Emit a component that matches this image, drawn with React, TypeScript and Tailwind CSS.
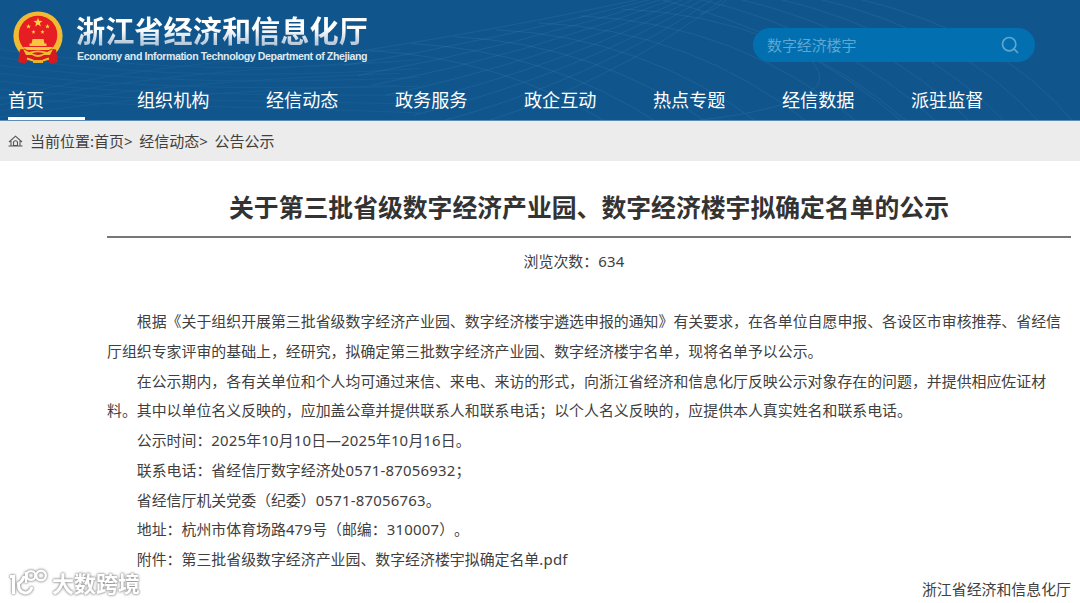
import { Search } from "lucide-react";

const NAV_ITEMS = [
  "首页",
  "组织机构",
  "经信动态",
  "政务服务",
  "政企互动",
  "热点专题",
  "经信数据",
  "派驻监督",
];

/* ================= DECORATION ================= */

const range = (n: number) => Array.from({ length: n }, (_, i) => i);

function HeaderWaves() {
  return (
    <svg
      className="absolute inset-0 h-full w-full"
      viewBox="0 0 1080 121"
      preserveAspectRatio="none"
      fill="none"
      stroke="#5f9fd0"
      strokeWidth="1"
    >
      {/* lines climbing to the right */}
      <g opacity="0.14">
        {range(9).map((i) => (
          <path
            key={i}
            d={`M${330 + i * 14} ${56 + i * 10} Q${480 + i * 16} ${34 + i * 7} ${655 + i * 9} -4`}
          />
        ))}
      </g>
      {/* arcs falling to the right */}
      <g opacity="0.15">
        {range(7).map((i) => (
          <path
            key={i}
            d={`M${370 + i * 42} ${51 - i * 7} Q${500 + i * 48} ${58 - i * 7} ${610 + i * 50} 125`}
          />
        ))}
        {range(6).map((i) => (
          <path
            key={i}
            d={`M${655 + i * 40} -2 Q${800 + i * 40} 32 ${905 + i * 34} 125`}
          />
        ))}
        <path d="M700 14 Q718 10 728 -2" />
        <path d="M812 62 Q830 84 806 94 Q780 112 700 121" />
      </g>
      {/* flat waves on the left */}
      <g opacity="0.09">
        {range(7).map((i) => (
          <path
            key={i}
            d={`M0 ${50 + i * 8} C120 ${66 + i * 7} 230 ${76 + i * 5} 420 ${60 + i * 9}`}
          />
        ))}
        {range(4).map((i) => (
          <path key={i} d={`M0 ${100 + i * 6} Q150 ${60 + i * 11} 400 ${50 + i * 12}`} />
        ))}
      </g>
    </svg>
  );
}

function Star({ x, y, r }: { x: number; y: number; r: number }) {
  const points = range(10)
    .map((i) => {
      const radius = i % 2 ? r * 0.42 : r;
      const a = (Math.PI / 5) * i - Math.PI / 2;
      return `${x + radius * Math.cos(a)},${y + radius * Math.sin(a)}`;
    })
    .join(" ");
  return <polygon points={points} fill="#fbd63c" />;
}

function Emblem() {
  return (
    <svg className="h-[54px] w-[50px]" viewBox="0 0 50 54">
      <circle cx="25" cy="25" r="24.6" fill="#f0bb33" />
      <circle cx="25" cy="24" r="19.3" fill="#e61d22" />
      <Star x={25} y={11.5} r={4.8} />
      <Star x={15.5} y={15.5} r={2.5} />
      <Star x={34.5} y={15.5} r={2.5} />
      <Star x={20.5} y={21} r={2.2} />
      <Star x={29.5} y={21} r={2.2} />
      {/* gate */}
      <path d="M19.5 28h11l1 4.5h-13z M16.5 32.5h17v2.5h-17z M10 36h30l-3 3h-24z" fill="#f6c73c" />
      {/* ribbons and gear */}
      <path
        d="M7 38.5 Q12 37 16 40 L34 40 Q38 37 43 38.5 L45 51 L38 52.5 L34 49 L16 49 L12 52.5 L5 51 Z"
        fill="#d8191d"
      />
      <path d="M10 38 L16 41 Q25 38 34 41 L40 38 L37 44 L31 44 Q25 48 19 44 L13 44 Z" fill="#f0bb33" />
      <path d="M19 42.6 Q25 40 31 42.6 Q25 45.5 19 42.6 Z" fill="#d8191d" />
      <path d="M14 47.5 L20 49.5 M36 47.5 L30 49.5" stroke="#f0bb33" strokeWidth="2" />
      <path d="M20 49h10v3h-10z" fill="#eab02f" />
    </svg>
  );
}

function HomeIcon() {
  return (
    <svg className="h-3 w-[15px]" viewBox="0 0 15 12" fill="none" stroke="#555" strokeWidth="1.1">
      <path d="M1 7 L7.5 1.2 L14 7 M3 6v4.5 M12 6v4.5 M0.5 11h14" />
      <path d="M5.5 10.5V7.8a2 2 0 0 1 4 0v2.7z" />
    </svg>
  );
}

function Watermark() {
  return (
    <div className="absolute top-[569px] left-[8px] flex items-center gap-1 text-white [filter:drop-shadow(0_0_1px_#888)_drop-shadow(0_0_1px_#bbb)]">
      <svg className="h-[28px] w-[40px]" viewBox="0 0 40 28" fill="none" stroke="#fff" strokeWidth="3">
        <path d="M2 7.5 H5.5 V25" />
        <path d="M16 7 Q15 12 10.5 14.5 Q10 23 17 24 Q22 24 24 18" />
        <path d="M18 14V3" strokeWidth="2.4" />
        <circle cx="23" cy="6.5" r="4.4" strokeWidth="2.4" />
        <circle cx="33" cy="6.5" r="4.8" strokeWidth="2.4" />
      </svg>
      <span className="text-[22px] leading-7 font-bold">大数跨境</span>
    </div>
  );
}

// latin runs are set slightly wider than the font's own advance
function Num({ children }: { children: string }) {
  return <span className="tracking-[0.22px]">{children}</span>;
}

/* ================= PAGE ================= */

export default function App() {
  return (
    <div className="relative h-[603px] w-[1080px] overflow-hidden bg-white font-['Noto_Sans','Noto_Sans_CJK_SC',sans-serif] text-[14.91px] text-[#404040] [text-spacing-trim:space-all]">
      <header className="relative h-[121px] border-b border-[#5e8db5] bg-[#10568c] text-white">
        <HeaderWaves />

        <div className="relative flex h-[82px] items-start justify-between pr-[45px] pl-[13px]">
          <div className="flex gap-[13px] pt-[11px]">
            <Emblem />
            <div className="pt-[3px]">
              <h1 className="bg-linear-to-b from-white from-45% to-[#b9cbdc] to-85% bg-clip-text text-[29.2px] leading-[34px] font-bold whitespace-nowrap text-transparent">
                浙江省经济和信息化厅
              </h1>
              <p className="pt-px pl-px font-['Liberation_Sans',sans-serif] text-[10.6px] leading-[14px] font-bold tracking-[-0.41px] whitespace-nowrap text-[#dfe8f0]">
                Economy and Information Technology Department of Zhejiang
              </p>
            </div>
          </div>

          <div className="mt-[28px] flex h-[34px] w-[282px] items-center justify-between rounded-full bg-[#0270b0] pr-[15px] pl-[14px] text-[#5fa6d0]">
            <span>数字经济楼宇</span>
            <Search size={20} strokeWidth={2} />
          </div>
        </div>

        <nav className="relative flex pl-2 text-[18.1px] leading-[37px]">
          {NAV_ITEMS.map((item, i) => (
            <a key={item} className="w-[129px] shrink-0">
              <span
                className={`block h-[38px] w-[77px] whitespace-nowrap ${
                  i === 0 ? "border-b-3 border-white" : ""
                }`}
              >
                {item}
              </span>
            </a>
          ))}
        </nav>
      </header>

      <div className="flex h-10 items-center gap-[7px] bg-[#ececec] pl-2">
        <HomeIcon />
        <span className="text-[15px] [word-spacing:2.3px]">
          当前位置:首页<Num>&gt; </Num>经信动态<Num>&gt; </Num>公告公示
        </span>
      </div>

      <main className="ml-[107px] w-[964px]">
        <h2 className="border-b-2 border-[#777] pt-[26px] pb-[9px] text-center text-[24.83px] leading-[40px] font-bold whitespace-nowrap text-[#333]">
          关于第三批省级数字经济产业园、数字经济楼宇拟确定名单的公示
        </h2>
        <p className="mt-[8px] pr-[30px] text-center leading-[30px]">
          浏览次数&#xff1a;<Num>634</Num>
        </p>

        <div className="mt-[31px] leading-[29.75px] [&>p]:indent-[2em]">
          <p>
            根据《关于组织开展第三批省级数字经济产业园、数字经济楼宇遴选申报的通知》有关要求&#xff0c;在各单位自愿申报、各设区市审核推荐、省经信厅组织专家评审的基础上&#xff0c;经研究&#xff0c;拟确定第三批数字经济产业园、数字经济楼宇名单&#xff0c;现将名单予以公示。
          </p>
          <p>
            在公示期内&#xff0c;各有关单位和个人均可通过来信、来电、来访的形式&#xff0c;向浙江省经济和信息化厅反映公示对象存在的问题&#xff0c;并提供相应佐证材料。其中以单位名义反映的&#xff0c;应加盖公章并提供联系人和联系电话&#xff1b;以个人名义反映的&#xff0c;应提供本人真实姓名和联系电话。
          </p>
          <p>
            公示时间&#xff1a;<Num>2025</Num>年<Num>10</Num>月<Num>10</Num>日—<Num>2025</Num>年<Num>10</Num>月<Num>16</Num>日。
          </p>
          <p>
            联系电话&#xff1a;省经信厅数字经济处<Num>0571-87056932</Num>&#xff1b;
          </p>
          <p>
            省经信厅机关党委&#xff08;纪委&#xff09;<Num>0571-87056763</Num>。
          </p>
          <p>
            地址&#xff1a;杭州市体育场路<Num>479</Num>号&#xff08;邮编&#xff1a;<Num>310007</Num>&#xff09;。
          </p>
          <p>
            附件&#xff1a;第三批省级数字经济产业园、数字经济楼宇拟确定名单<Num>.pdf</Num>
          </p>
          <p className="text-right">浙江省经济和信息化厅</p>
        </div>
      </main>

      <Watermark />
    </div>
  );
}
